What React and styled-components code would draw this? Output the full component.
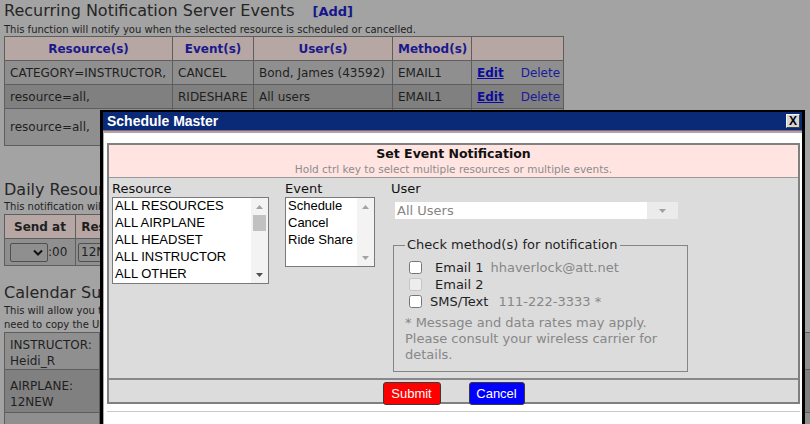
import React from "react";
import styled, { createGlobalStyle } from "styled-components";

const verdana = `"DejaVu Sans", Verdana, "Liberation Sans", sans-serif`;
const arial = `"Liberation Sans", Arial, sans-serif`;

const GlobalStyle = createGlobalStyle`
  html, body {
    margin: 0;
    padding: 0;
    background: #a3a3a3;
  }
`;

const Screen = styled.div`
  position: relative;
  width: 810px;
  height: 424px;
  overflow: hidden;
  background: #a3a3a3;
  font-family: ${verdana};
  color: #1f1f1f;
`;

const Page = styled.div`
  padding: 0 4px;
`;

const Heading = styled.h2`
  margin: ${p => p.$top || 0}px 0 0;
  font-weight: normal;
  font-size: 16px;
  line-height: 22px;
  color: #262626;
  white-space: nowrap;
`;

const AddLink = styled.a`
  margin-left: 18px;
  font-size: 13px;
  font-weight: bold;
  color: #16168c;
  text-decoration: none;
`;

const Note = styled.div`
  margin-top: ${p => p.$top || 0}px;
  font-size: 10px;
  line-height: ${p => p.$lh || 12}px;
  white-space: nowrap;
  color: #222;
`;

const Grid = styled.table`
  border-collapse: collapse;
  table-layout: fixed;
  width: ${p => p.$width}px;
  margin-top: ${p => p.$top || 0}px;

  th,
  td {
    border: 1px solid #5e5e5e;
    padding: 0 5px;
    font-size: 12px;
    white-space: nowrap;
    overflow: hidden;
    text-align: left;
  }

  th {
    background: #b6a6a4;
    height: 23px;
    text-align: center;
    color: ${p => (p.$plainHead ? "#1f1f1f" : "#1a1a8c")};
  }
`;

const Col = styled.col`
  width: ${p => p.$w}px;
`;

const Row = styled.tr`
  background: ${p => (p.$dark ? "#808080" : "#8f8f8f")};

  td {
    height: ${p => p.$h || 23}px;
    vertical-align: ${p => (p.$top ? "top" : "middle")};
    padding-top: ${p => p.$pt || 0}px;
    line-height: ${p => (p.$top ? "16px" : "normal")};
  }
`;

const EditLink = styled.a`
  font-weight: bold;
  color: #0b0b9e;
  text-decoration: underline;
`;

const DeleteLink = styled.a`
  margin-left: 17px;
  color: #1a1a9a;
`;

const MiniSelect = styled.span`
  display: inline-flex;
  align-items: center;
  justify-content: flex-end;
  box-sizing: border-box;
  width: 38px;
  height: 19px;
  padding-right: 4px;
  border: 1px solid #505050;
  border-radius: 2px;
  vertical-align: middle;
`;

const MiniBox = styled.span`
  display: inline-block;
  box-sizing: border-box;
  height: 19px;
  margin-left: -3px;
  padding: 0 2px;
  border: 1px solid #505050;
  border-radius: 2px;
  vertical-align: middle;
  line-height: 17px;
`;

/* ---------- dialog ---------- */

const Dialog = styled.div`
  position: absolute;
  left: 100px;
  top: 110px;
  width: 705px;
  height: 330px;
  box-sizing: border-box;
  display: flex;
  flex-direction: column;
  border: solid #000;
  border-width: 2px 3px 0 3px;
  background: #fff;
`;

const TitleBar = styled.div`
  height: 18px;
  flex-shrink: 0;
  display: flex;
  align-items: center;
  justify-content: space-between;
  padding: 0 2px 0 4px;
  background: #0a2a78;
  border-bottom: 1px solid #8c6078;
  color: #fff;
  font: bold 14px ${arial};
`;

const CloseButton = styled.span`
  display: flex;
  align-items: center;
  justify-content: center;
  box-sizing: border-box;
  width: 14px;
  height: 14px;
  background: #d6d6d6;
  border: 1px solid;
  border-color: #f4f4f4 #404040 #404040 #f4f4f4;
  color: #000;
  font: bold 12px ${arial};
`;

const Frame = styled.div`
  flex: 1;
  padding: 10px 2px 0 3px;
  border-top: 2px solid #a8a8a8;
  border-left: 1px solid #a8a8a8;
  background: #fff;
`;

const Panel = styled.div`
  border: 2px solid #808080;
  background: #dcdcdc;
`;

const PanelHead = styled.div`
  height: 32px;
  border-bottom: 1px solid #9a9a9a;
  background: #ffe4e1;
  text-align: center;
`;

const HeadTitle = styled.div`
  font-size: 12.5px;
  font-weight: bold;
  line-height: 17px;
  color: #111;
`;

const HeadHint = styled.div`
  font-size: 10.5px;
  line-height: 15px;
  color: #8c8c8c;
`;

const PanelBody = styled.div`
  height: 200px;
  display: flex;
  padding: 2px 0 0 3px;
  box-sizing: border-box;
`;

const Column = styled.div`
  margin-left: ${p => p.$gap || 0}px;
  display: flex;
  flex-direction: column;
`;

const Label = styled.div`
  font-size: 13px;
  line-height: 17px;
  color: #111;
`;

const ListBox = styled.div`
  width: ${p => p.$w}px;
  height: ${p => p.$h}px;
  box-sizing: border-box;
  display: flex;
  border: 1px solid #7a7a7a;
  background: #fff;
`;

const Options = styled.div`
  flex: 1;
  margin-top: -1px;
  padding-left: 2px;
  overflow: hidden;
  white-space: nowrap;
  font: 13px/17px ${arial};
  color: #000;
`;

const Track = styled.div`
  position: relative;
  width: 17px;
  display: flex;
  flex-direction: column;
  justify-content: space-between;
  background: #f3f3f3;
`;

const ArrowCell = styled.div`
  height: 17px;
  display: flex;
  align-items: center;
  justify-content: center;
`;

const Thumb = styled.div`
  position: absolute;
  left: 2px;
  right: 2px;
  top: 17px;
  height: 16px;
  background: #c1c1c1;
`;

const UserSelect = styled.div`
  margin: 5px 0 0 4px;
  width: 283px;
  height: 17px;
  display: flex;
  background: #fff;
`;

const SelectText = styled.div`
  flex: 1;
  padding-left: 2px;
  font-size: 13px;
  line-height: 17px;
  color: #858585;
`;

const SelectArrow = styled.div`
  width: 31px;
  display: flex;
  align-items: center;
  justify-content: center;
  background: #ebebeb;
`;

const Methods = styled.fieldset`
  margin: 18px 0 0 2px;
  width: 295px;
  box-sizing: border-box;
  padding: 6px 10px 8px 11px;
  border: 1px solid #858585;
  min-width: 0;
`;

const Legend = styled.legend`
  padding: 0 2px;
  font-size: 13px;
  line-height: 16px;
  color: #1f1f1f;
`;

const CheckRow = styled.label`
  height: 17px;
  display: flex;
  align-items: center;
  font-size: 13px;
  white-space: nowrap;
  color: #1f1f1f;

  input {
    margin: 3px 3px 3px 4px;
    width: 13px;
    height: 13px;
  }
`;

const MethodName = styled.span`
  margin-left: ${p => p.$indent}px;
`;

const MethodValue = styled.span`
  margin-left: ${p => p.$gap}px;
  color: #878787;
`;

const Disclaimer = styled.div`
  margin-top: 5px;
  font-size: 13px;
  line-height: 16px;
  color: #878787;
`;

const PanelFoot = styled.div`
  height: 24px;
  display: flex;
  justify-content: center;
  align-items: flex-start;
  gap: 28px;
  padding-top: 2px;
  box-sizing: border-box;
  border-top: 2px solid #888;
`;

const Button = styled.button`
  width: ${p => p.$w}px;
  height: 23px;
  padding: 0;
  border: 1px solid #3a3a3a;
  border-radius: 3px;
  background: ${p => p.$bg};
  color: #fff;
  font: 13px ${arial};
`;

const Rule = styled.div`
  margin-top: 7px;
  height: 1px;
  background: #c8c8c8;
`;

const Triangle = ({ down, color }) => (
  <svg width="7" height="4" viewBox="0 0 7 4">
    <path d={down ? "M0 0h7L3.5 4z" : "M0 4h7L3.5 0z"} fill={color} />
  </svg>
);

const Chevron = () => (
  <svg width="10" height="7" viewBox="0 0 10 7">
    <path d="M1 1.5l4 4 4-4" fill="none" stroke="#111" strokeWidth="2" />
  </svg>
);

const resources = ["ALL RESOURCES", "ALL AIRPLANE", "ALL HEADSET", "ALL INSTRUCTOR", "ALL OTHER"];
const events = ["Schedule", "Cancel", "Ride Share"];

export default function App() {
  return (
    <Screen>
      <GlobalStyle />
      <Page>
        <Heading>
          Recurring Notification Server Events<AddLink>[Add]</AddLink>
        </Heading>
        <Note $top={1}>
          This function will notify you when the selected resource is scheduled or cancelled.
        </Note>
        <Grid $width={559}>
          <colgroup>
            <Col $w={168} />
            <Col $w={81} />
            <Col $w={139} />
            <Col $w={79} />
            <Col $w={92} />
          </colgroup>
          <thead>
            <tr>
              <th>Resource(s)</th>
              <th>Event(s)</th>
              <th>User(s)</th>
              <th>Method(s)</th>
              <th />
            </tr>
          </thead>
          <tbody>
            <Row>
              <td>CATEGORY=INSTRUCTOR,</td>
              <td>CANCEL</td>
              <td>Bond, James (43592)</td>
              <td>EMAIL1</td>
              <td>
                <EditLink>Edit</EditLink>
                <DeleteLink>Delete</DeleteLink>
              </td>
            </Row>
            <Row $dark>
              <td>resource=all,</td>
              <td>RIDESHARE</td>
              <td>All users</td>
              <td>EMAIL1</td>
              <td>
                <EditLink>Edit</EditLink>
                <DeleteLink>Delete</DeleteLink>
              </td>
            </Row>
            <Row $h={36}>
              <td>resource=all,</td>
              <td>SCHEDULE</td>
              <td>All users</td>
              <td>EMAIL1</td>
              <td>
                <EditLink>Edit</EditLink>
                <DeleteLink>Delete</DeleteLink>
              </td>
            </Row>
          </tbody>
        </Grid>

        <Heading $top={33}>Daily Resource Schedule</Heading>
        <Note>This notification will send you a daily schedule.</Note>
        <Grid $width={360} $top={1} $plainHead>
          <colgroup>
            <Col $w={71} />
            <Col $w={92} />
            <Col $w={197} />
          </colgroup>
          <thead>
            <tr>
              <th>Send at</th>
              <th>Resource(s)</th>
              <th>Method(s)</th>
            </tr>
          </thead>
          <tbody>
            <Row $h={26}>
              <td>
                <MiniSelect>
                  <Chevron />
                </MiniSelect>
                :00
              </td>
              <td>
                <MiniBox>12NEW</MiniBox>
              </td>
              <td>EMAIL1</td>
            </Row>
          </tbody>
        </Grid>

        <Heading $top={16}>Calendar Subscriptions</Heading>
        <Note $lh={14}>This will allow you to subscribe to a schedule. You will</Note>
        <Note $lh={14}>need to copy the URL into your calendar program.</Note>
        <Grid $width={900}>
          <colgroup>
            <Col $w={95} />
            <Col $w={600} />
            <Col $w={205} />
          </colgroup>
          <tbody>
            <Row $h={31} $top $pt={4}>
              <td>
                INSTRUCTOR:
                <br />
                Heidi_R
              </td>
              <td>https://www.schedulemaster.com/ical</td>
              <td>ADD</td>
            </Row>
            <Row $dark $h={34} $top $pt={8}>
              <td>
                AIRPLANE:
                <br />
                12NEW
              </td>
              <td>https://www.schedulemaster.com/ical</td>
              <td>5</td>
            </Row>
            <Row $h={30}>
              <td />
              <td />
              <td />
            </Row>
          </tbody>
        </Grid>
      </Page>

      <Dialog>
        <TitleBar>
          Schedule Master
          <CloseButton>X</CloseButton>
        </TitleBar>
        <Frame>
          <Panel>
            <PanelHead>
              <HeadTitle>Set Event Notification</HeadTitle>
              <HeadHint>Hold ctrl key to select multiple resources or multiple events.</HeadHint>
            </PanelHead>
            <PanelBody>
              <Column>
                <Label>Resource</Label>
                <ListBox $w={157} $h={87}>
                  <Options>
                    {resources.map(r => (
                      <div key={r}>{r}</div>
                    ))}
                  </Options>
                  <Track>
                    <ArrowCell>
                      <Triangle color="#a3a3a3" />
                    </ArrowCell>
                    <Thumb />
                    <ArrowCell>
                      <Triangle down color="#505050" />
                    </ArrowCell>
                  </Track>
                </ListBox>
              </Column>
              <Column $gap={16}>
                <Label>Event</Label>
                <ListBox $w={90} $h={70}>
                  <Options>
                    {events.map(e => (
                      <div key={e}>{e}</div>
                    ))}
                  </Options>
                  <Track>
                    <ArrowCell>
                      <Triangle color="#a3a3a3" />
                    </ArrowCell>
                    <ArrowCell>
                      <Triangle down color="#a3a3a3" />
                    </ArrowCell>
                  </Track>
                </ListBox>
              </Column>
              <Column $gap={16}>
                <Label>User</Label>
                <UserSelect>
                  <SelectText>All Users</SelectText>
                  <SelectArrow>
                    <Triangle down color="#a0a0a0" />
                  </SelectArrow>
                </UserSelect>
                <Methods>
                  <Legend>Check method(s) for notification</Legend>
                  <CheckRow>
                    <input type="checkbox" />
                    <MethodName $indent={10}>Email 1</MethodName>
                    <MethodValue $gap={7}>hhaverlock@att.net</MethodValue>
                  </CheckRow>
                  <CheckRow>
                    <input type="checkbox" disabled />
                    <MethodName $indent={10}>Email 2</MethodName>
                  </CheckRow>
                  <CheckRow>
                    <input type="checkbox" />
                    <MethodName $indent={5}>SMS/Text</MethodName>
                    <MethodValue $gap={10}>111-222-3333 *</MethodValue>
                  </CheckRow>
                  <Disclaimer>
                    * Message and data rates may apply.
                    <br />
                    Please consult your wireless carrier for
                    <br />
                    details.
                  </Disclaimer>
                </Methods>
              </Column>
            </PanelBody>
            <PanelFoot>
              <Button $bg="#ff0000" $w={58}>
                Submit
              </Button>
              <Button $bg="#0000ff" $w={56}>
                Cancel
              </Button>
            </PanelFoot>
          </Panel>
          <Rule />
        </Frame>
      </Dialog>
    </Screen>
  );
}
